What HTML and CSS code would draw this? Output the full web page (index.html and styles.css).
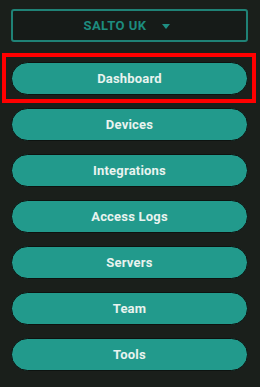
FILE: index.html
```html
<!DOCTYPE html>
<html>
<head>
<meta charset="utf-8">
<link rel="stylesheet" href="styles.css">
</head>
<body>
<div class="sidebar">
  <button class="org-select">
    <span class="org-name">SALTO UK</span>
    <svg class="caret" width="8" height="5" viewBox="0 0 8 5"><path d="M0 0 L8 0 L4 5 Z" fill="#1f8f82"/></svg>
  </button>
  <nav class="nav">
    <div class="active-frame"><a class="nav-btn">Dashboard</a></div>
    <a class="nav-btn">Devices</a>
    <a class="nav-btn">Integrations</a>
    <a class="nav-btn">Access Logs</a>
    <a class="nav-btn">Servers</a>
    <a class="nav-btn">Team</a>
    <a class="nav-btn">Tools</a>
  </nav>
</div>
</body>
</html>
```
FILE: styles.css
```css
html, body {
  margin: 0;
  padding: 0;
  background: #1a1f1b;
}
body {
  width: 260px;
  height: 387px;
  overflow: hidden;
  font-family: "Roboto", "Liberation Sans", sans-serif;
}
.sidebar {
  padding: 9px 12px 0 11px;
  display: flex;
  flex-direction: column;
}
.org-select {
  box-sizing: border-box;
  height: 33px;
  width: 237px;
  background: #161b18;
  border: 2px solid #1f8276;
  border-radius: 3px;
  display: flex;
  align-items: center;
  justify-content: center;
  gap: 15px;
  padding: 0 6px 0 0;
  margin: 0;
  font-family: inherit;
}
.org-name {
  color: #1d8c7f;
  font-weight: 700;
  font-size: 13px;
  letter-spacing: 0.5px;
}
.caret {
  display: block;
  margin-top: 1px;
}
.nav {
  margin-top: 20px;
  display: flex;
  flex-direction: column;
  gap: 13px;
}
.active-frame {
  border: 4px solid #ff0000;
  padding: 5px 4px 4px 5px;
  margin: -9px -8px -8px -9px;
  display: flex;
}
.nav-btn {
  box-sizing: border-box;
  width: 237px;
  height: 33px;
  background: #229a8c;
  border: 1px solid #0d1310;
  border-radius: 17px;
  display: flex;
  align-items: center;
  justify-content: center;
  color: #e9f3ef;
  font-weight: 700;
  font-size: 13px;
  letter-spacing: 0.2px;
}
```
